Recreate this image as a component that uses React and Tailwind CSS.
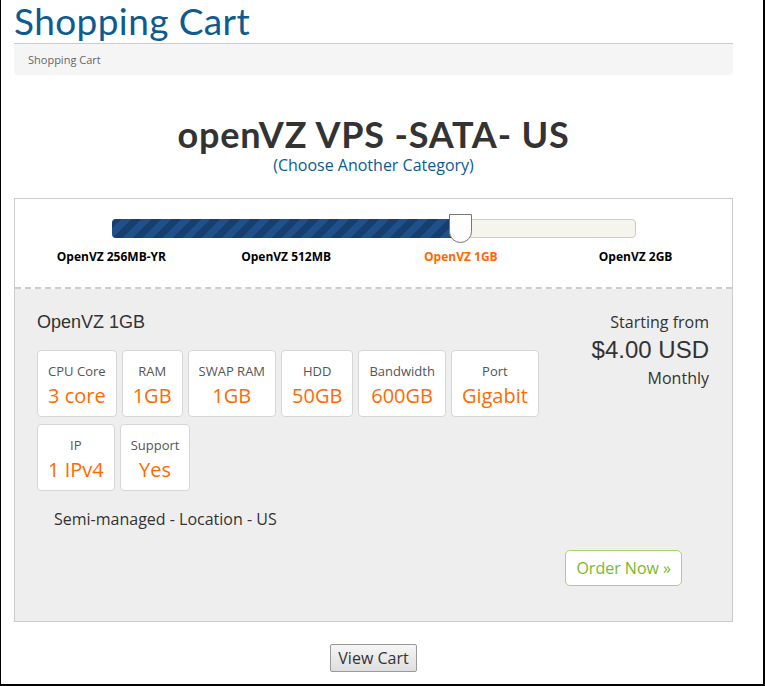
import React from 'react';

const features = [
  { label: 'CPU Core', value: '3 core' },
  { label: 'RAM', value: '1GB' },
  { label: 'SWAP RAM', value: '1GB' },
  { label: 'HDD', value: '50GB' },
  { label: 'Bandwidth', value: '600GB' },
  { label: 'Port', value: 'Gigabit' },
  { label: 'IP', value: '1 IPv4' },
  { label: 'Support', value: 'Yes' },
];

const plans = ['OpenVZ 256MB-YR', 'OpenVZ 512MB', 'OpenVZ 1GB', 'OpenVZ 2GB'];

function PlanSlider() {
  return (
    <div className="border-b-2 border-dashed border-[#cccccc] pt-[20px] pb-[22px]">
      <div className="relative mx-auto h-[19px] w-[524px]">
        <div className="absolute inset-0 rounded-[4px] border border-[#cccccc] bg-[#f5f5ee]" />
        <div className="absolute left-0 top-0 h-[19px] w-[349px] rounded-l-[4px] bg-[repeating-linear-gradient(135deg,#163f70_0,#163f70_7px,#20508a_7px,#20508a_14px)]" />
        <div className="absolute left-[337px] top-[-5px] h-[29px] w-[23px] rounded-b-full border border-[#777777] bg-white" />
      </div>
      <div className="mx-auto mt-[11px] grid w-[699px] grid-cols-4 font-['Open_Sans',sans-serif] text-[12px] font-bold leading-4">
        {plans.map((p) => (
          <div key={p} className={`text-center ${p === 'OpenVZ 1GB' ? 'text-[#ff6600]' : 'text-black'}`}>
            {p}
          </div>
        ))}
      </div>
    </div>
  );
}

function FeatureBox({ label, value }) {
  return (
    <div className="rounded-[4px] border border-[#d6d6d6] bg-white px-[10px] pt-[11px] pb-[7px] text-center">
      <div className="text-[13px] leading-[18px] text-[#555555]">{label}</div>
      <div className="mt-[3px] text-[20px] leading-[26px] text-[#ff6a00]">{value}</div>
    </div>
  );
}

export default function App() {
  return (
    <div className="box-border h-[686px] w-[765px] border-l border-r-2 border-b-2 border-black bg-white font-['Open_Sans',sans-serif] text-[#333333]">
      <div className="w-[719px] pl-[13px] box-content">
        <h1 className="font-['Lato',sans-serif] text-[37px] font-normal leading-[42px] tracking-[0.4px] text-[#0f5a8f]">
          Shopping Cart
        </h1>
        <div className="mt-[1px] h-[32px] rounded-b-[4px] border-t border-[#cccccc] bg-[#f5f5f5] pl-[14px] text-[11px] leading-[31px] text-[#666666]">
          Shopping Cart
        </div>

        <div className="mt-[38px] text-center">
          <div className="font-['Lato',sans-serif] text-[36px] font-bold leading-[42px] tracking-[0.8px] text-[#333333]">
            openVZ VPS -SATA- US
          </div>
          <a className="block text-[16px] leading-[20px] text-[#0b5b95]">(Choose Another Category)</a>
        </div>

        <div className="mt-[23px] border border-[#cccccc]">
          <PlanSlider />
          <div className="bg-[#eeeeee] px-[22px] pt-[22px] pb-[35px]">
            <div className="flex">
              <div className="w-[530px]">
                <div className="font-['Liberation_Sans',sans-serif] text-[18px] leading-[22px] text-[#333333]">
                  OpenVZ 1GB
                </div>
                <div className="mt-[17px] flex flex-wrap gap-x-[5px] gap-y-[7px] w-[525px]">
                  {features.map((f) => (
                    <FeatureBox key={f.label} {...f} />
                  ))}
                </div>
                <div className="mt-[16px] pl-[17px] text-[16px] leading-[24px] text-[#333333]">
                  Semi-managed - Location - US
                </div>
              </div>
              <div className="flex-1 pr-[1px] text-right">
                <div className="mt-[1px] text-[16px] leading-[20px]">Starting from</div>
                <div className="mt-[4px] font-['Liberation_Sans',sans-serif] text-[24px] leading-[28px]">$4.00 USD</div>
                <div className="mt-[4px] text-[16px] leading-[20px]">Monthly</div>
              </div>
            </div>
            <div className="mt-[19px] flex justify-end pr-[28px]">
              <button className="h-[36px] rounded-[5px] border border-[#a4d867] bg-white px-[10px] text-[16px] text-[#7ab929]">
                Order Now »
              </button>
            </div>
          </div>
        </div>

        <div className="mt-[22px] flex justify-center">
          <button className="h-[28px] rounded-[2px] border border-[#999999] bg-[linear-gradient(#f6f6f6,#dedede)] px-[7px] text-[16px] leading-[24px] text-[#333333]">
            View Cart
          </button>
        </div>
      </div>
    </div>
  );
}
